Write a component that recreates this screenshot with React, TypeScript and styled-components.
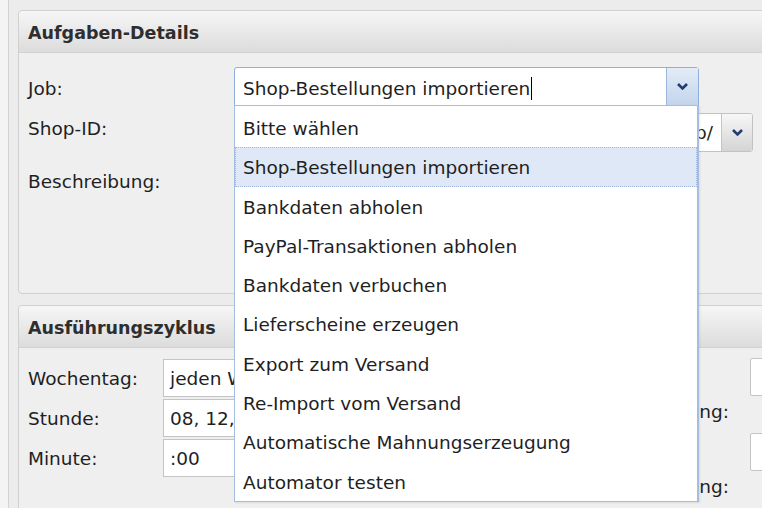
import React from "react";
import styled, { createGlobalStyle } from "styled-components";

const jobs = [
  "Bitte wählen",
  "Shop-Bestellungen importieren",
  "Bankdaten abholen",
  "PayPal-Transaktionen abholen",
  "Bankdaten verbuchen",
  "Lieferscheine erzeugen",
  "Export zum Versand",
  "Re-Import vom Versand",
  "Automatische Mahnungserzeugung",
  "Automator testen",
];

const Chevron = () => (
  <svg width="13" height="9" viewBox="0 0 13 9">
    <path
      d="M2 2 L6.5 6.5 L11 2"
      fill="none"
      stroke="#213c73"
      strokeWidth="2.6"
      strokeLinejoin="miter"
    />
  </svg>
);

export default function App() {
  return (
    <>
      <Global />
      <Page>
        <Panel>
          <PanelHeader>Aufgaben-Details</PanelHeader>
          <DetailsBody>
            <Label $shift={2}>Job:</Label>
            <Combo>
              <ComboText>
                Shop-Bestellungen importieren
                <Caret />
              </ComboText>
              <ComboButton>
                <Chevron />
              </ComboButton>
              <DropList>
                {jobs.map((job, i) => (
                  <DropItem key={job} $selected={i === 1}>
                    {job}
                  </DropItem>
                ))}
              </DropList>
            </Combo>

            <Label $shift={-4}>Shop-ID:</Label>
            <Select>
              <SelectText>http://www.mein-onlineshop.de/shop/</SelectText>
              <SelectButton>
                <Chevron />
              </SelectButton>
            </Select>

            <Label $shift={3}>Beschreibung:</Label>
            <TextArea />
          </DetailsBody>
        </Panel>

        <Panel>
          <PanelHeader>Ausführungszyklus</PanelHeader>
          <CycleBody>
            <LeftGrid>
              <SmallLabel>Wochentag:</SmallLabel>
              <Field>jeden Wochentag</Field>
              <SmallLabel>Stunde:</SmallLabel>
              <Field>08, 12, 16, 20</Field>
              <SmallLabel>Minute:</SmallLabel>
              <Field>:00</Field>
            </LeftGrid>
            <RightGrid>
              <RightRow>
                <TwoLineLabel>
                  Nächste
                  <br />
                  Ausführung:
                </TwoLineLabel>
                <SideField />
              </RightRow>
              <RightRow>
                <TwoLineLabel>
                  Letzte
                  <br />
                  Ausführung:
                </TwoLineLabel>
                <SideField />
              </RightRow>
            </RightGrid>
          </CycleBody>
        </Panel>
      </Page>
    </>
  );
}

const Global = createGlobalStyle`
  html, body {
    margin: 0;
    padding: 0;
    background: #f4f4f4;
    overflow: hidden;
  }
  body {
    font-family: "DejaVu Sans", "Liberation Sans", sans-serif;
    font-size: 18.5px;
    color: #1f1f1f;
  }
  * { box-sizing: border-box; }
`;

const Page = styled.div`
  margin-left: 8px;
  width: 920px;
  min-height: 520px;
  padding: 10px 0 0 9px;
  border-left: 1px solid #d3d3d3;
  background: #ececec;
`;

const Panel = styled.section`
  border: 1px solid #d0d0d0;
  border-radius: 4px;
  background: #efefef;
  margin-bottom: 11px;
`;

const PanelHeader = styled.div`
  height: 42px;
  display: flex;
  align-items: center;
  padding: 3px 0 0 9px;
  border-bottom: 1px solid #d2d2d2;
  border-radius: 4px 4px 0 0;
  background: linear-gradient(#f6f6f6, #dcdcdc);
  font-weight: bold;
  font-size: 17.5px;
  color: #2e2e2e;
`;

const DetailsBody = styled.div`
  display: grid;
  grid-template-columns: 206px 465px;
  grid-template-rows: 39px 39px 1fr;
  row-gap: 7px;
  height: 240px;
  padding: 14px 0 0 9px;
`;

const Label = styled.div<{ $shift: number }>`
  line-height: 39px;
  margin-top: ${(p) => p.$shift}px;
  white-space: nowrap;
`;

const Combo = styled.div`
  position: relative;
  display: flex;
  height: 39px;
  border: 1px solid #8eaedd;
  border-radius: 3px 3px 0 0;
  background: #fff;
`;

const ComboText = styled.div`
  flex: 1;
  display: flex;
  align-items: center;
  padding: 3px 0 0 8px;
  white-space: nowrap;
`;

const Caret = styled.span`
  display: inline-block;
  width: 0;
  height: 23px;
  margin-left: 1px;
  border-right: 1.5px solid #000;
`;

const ComboButton = styled.div`
  width: 32px;
  display: flex;
  align-items: center;
  justify-content: center;
  border-left: 1px solid #9cb7de;
  background: linear-gradient(#e3ecf8, #c3d4ec);
`;

const DropList = styled.ul`
  position: absolute;
  z-index: 10;
  top: 100%;
  left: -1px;
  width: 465px;
  margin: 0;
  padding: 2px 0 0;
  list-style: none;
  background: #fff;
  border: 1px solid #a6bde2;
  border-right-width: 2px;
  box-shadow: 1px 1px 2px rgba(0, 0, 0, 0.08);
`;

const DropItem = styled.li<{ $selected?: boolean }>`
  height: 39.3px;
  line-height: 34.3px;
  padding: 3px 0 0 7px;
  white-space: nowrap;
  border: 1px dotted ${(p) => (p.$selected ? "#a3b8dc" : "transparent")};
  background: ${(p) => (p.$selected ? "#dfe8f6" : "transparent")};
`;

const Select = styled.div`
  display: flex;
  width: 519px;
  height: 39px;
  border: 1px solid #c2c2c2;
  border-radius: 3px;
  background: #fff;
  overflow: hidden;
`;

const SelectText = styled.div`
  flex: 1;
  line-height: 37px;
  text-align: right;
  padding-right: 8px;
  white-space: nowrap;
  overflow: hidden;
`;

const SelectButton = styled.div`
  width: 31px;
  display: flex;
  align-items: center;
  justify-content: center;
  border-left: 1px solid #c4c4c4;
  background: linear-gradient(#f7f7f7, #d4d4d4);
`;

const TextArea = styled.div`
  width: 455px;
  height: 118px;
  border: 1px solid #c6c6c6;
  background: #fff;
`;

const CycleBody = styled.div`
  display: flex;
  height: 200px;
  padding: 11px 0 0 9px;
`;

const LeftGrid = styled.div`
  display: grid;
  grid-template-columns: 135px 300px;
  grid-auto-rows: 38px;
  row-gap: 2px;
  width: 588px;
`;

const SmallLabel = styled.div`
  padding-top: 2px;
  line-height: 36px;
  white-space: nowrap;
`;

const Field = styled.div`
  padding: 2px 0 0 6px;
  line-height: 34px;
  border: 1px solid #c4c4c4;
  background: #fff;
  white-space: nowrap;
  overflow: hidden;
`;

const RightGrid = styled.div`
  margin-top: -7px;
  display: flex;
  flex-direction: column;
`;

const RightRow = styled.div`
  display: grid;
  grid-template-columns: 134px 120px;
  height: 75px;
  align-items: start;
`;

const TwoLineLabel = styled.div`
  margin-top: 3px;
  line-height: 37.5px;
  white-space: nowrap;
`;

const SideField = styled.div`
  margin-top: 6px;
  height: 38px;
  border: 1px solid #c4c4c4;
  border-radius: 2px;
  background: #fff;
`;
